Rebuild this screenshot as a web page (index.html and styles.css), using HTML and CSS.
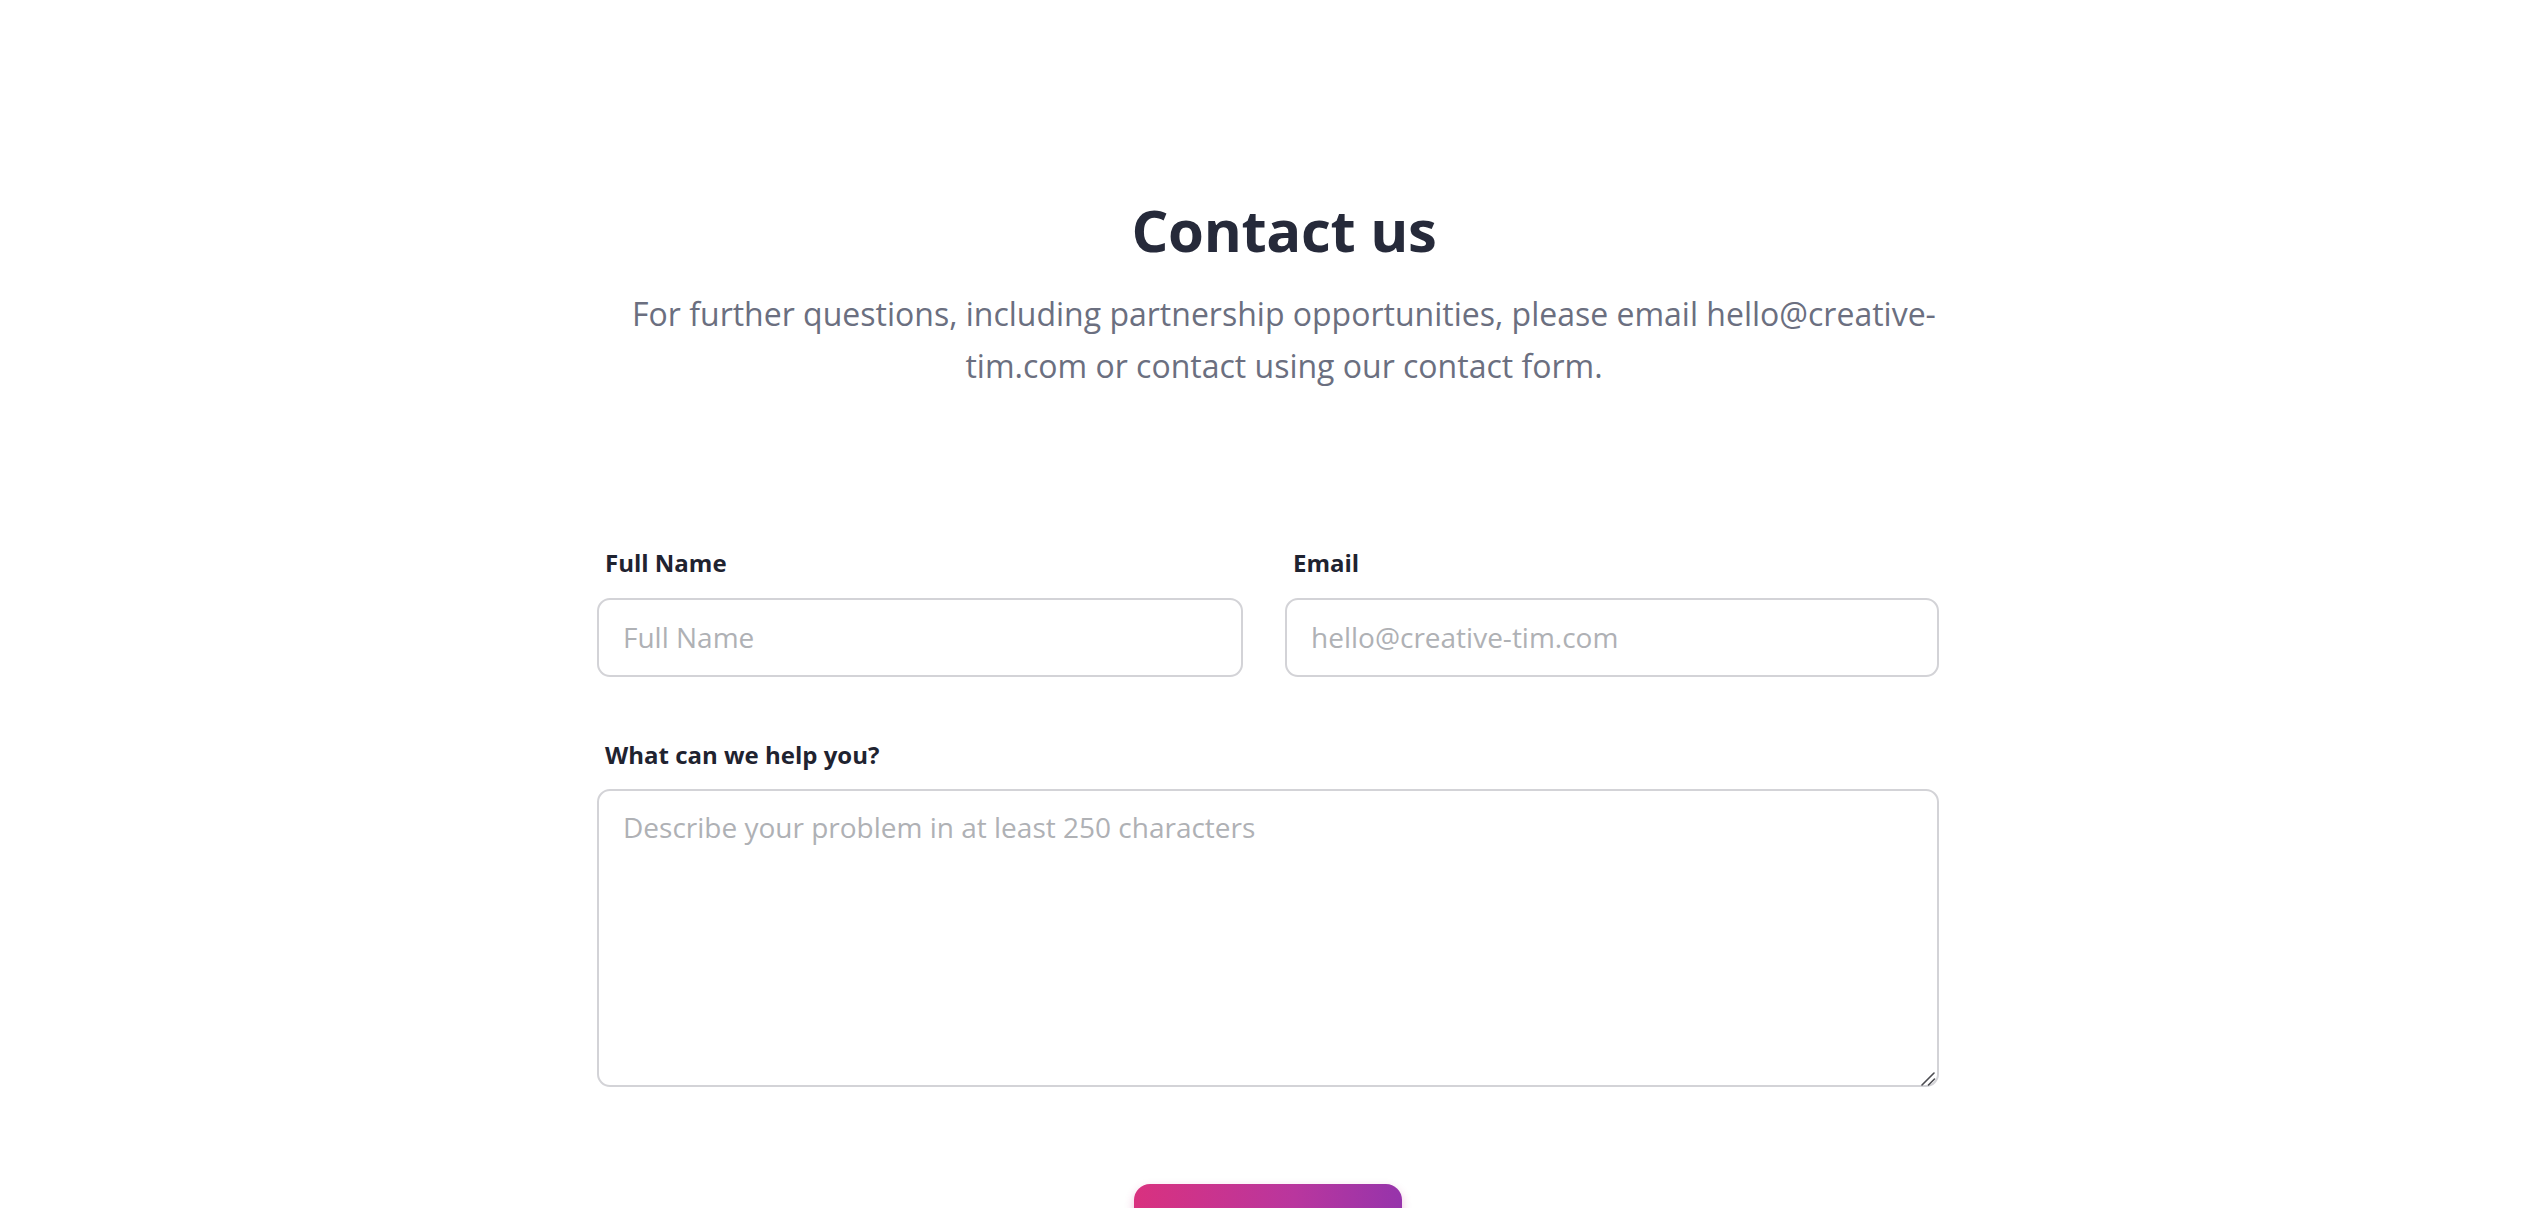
FILE: index.html
```html
<!DOCTYPE html>
<html lang="en">
<head>
<meta charset="utf-8">
<title>Contact us</title>
<link rel="stylesheet" href="styles.css">
</head>
<body>
<section class="contact">
  <div class="intro">
    <h2 class="title">Contact us</h2>
    <p class="lead">For further questions, including partnership opportunities, please email hello@creative-tim.com or contact using our contact form.</p>
  </div>
  <form class="form">
    <div class="row">
      <div class="field">
        <label class="label" for="name">Full Name</label>
        <input class="input" id="name" type="text" placeholder="Full Name">
      </div>
      <div class="field">
        <label class="label" for="email">Email</label>
        <input class="input" id="email" type="email" placeholder="hello@creative-tim.com">
      </div>
    </div>
    <div class="field field-full">
      <label class="label" for="msg">What can we help you?</label>
      <div class="textarea-wrap">
        <textarea class="textarea" id="msg" placeholder="Describe your problem in at least 250 characters"></textarea>
        <svg class="grip" width="16" height="16" viewBox="0 0 16 16" aria-hidden="true">
          <path d="M2 15 L14 3" stroke="#4d4d52" stroke-width="1.6" stroke-linecap="round"/>
          <path d="M8.5 15 L14.5 9" stroke="#4d4d52" stroke-width="1.6" stroke-linecap="round"/>
        </svg>
      </div>
    </div>
    <div class="actions">
      <button class="btn" type="button">Send Message</button>
    </div>
  </form>
</section>
</body>
</html>
```
FILE: styles.css
```css
* { box-sizing: border-box; }
html, body { margin: 0; padding: 0; background: #ffffff; }
body {
  font-family: "Open Sans", "Noto Sans", sans-serif;
  color: #262937;
  overflow: hidden;
}
.contact {
  padding-top: 194px;
}
.intro {
  width: 1372px;
  margin: 0 auto;
  padding-left: 32px;
  text-align: center;
}
.title {
  margin: 0;
  font-size: 58px;
  line-height: 72px;
  font-weight: 700;
  color: #262a3a;
  letter-spacing: -0.3px;
}
.lead {
  margin: 22px 0 0;
  font-size: 32px;
  line-height: 52px;
  font-weight: 400;
  color: #6b6f80;
}
.form {
  width: 1342px;
  margin: 154px auto 0;
}
.row {
  display: grid;
  grid-template-columns: 646px 654px;
  column-gap: 42px;
}
.field {
  display: flex;
  flex-direction: column;
}
.field-full {
  margin-top: 61px;
}
.label {
  margin: 0 0 18px 8px;
  font-size: 24px;
  line-height: 33.6px;
  font-weight: 700;
  color: #1f2330;
}
.input, .textarea {
  width: 100%;
  border: 2px solid #d3d3d7;
  border-radius: 13px;
  background: #ffffff;
  font-family: "Open Sans", "Noto Sans", sans-serif;
  font-size: 28px;
  font-weight: 400;
  color: #333;
  outline: none;
}
.input {
  height: 79px;
  padding: 0 24px;
}
.textarea-wrap {
  position: relative;
}
.textarea {
  height: 298px;
  padding: 16px 24px;
  line-height: 40px;
  resize: none;
  display: block;
}
.grip {
  position: absolute;
  right: 3px;
  bottom: 1px;
}
.input::placeholder, .textarea::placeholder {
  color: #afb1b5;
}
.actions {
  display: flex;
  justify-content: center;
  margin-top: 97px;
}
.btn {
  width: 268px;
  height: 80px;
  border: none;
  border-radius: 16px;
  background: linear-gradient(90deg, #d9317f 0%, #b9369e 60%, #9634ab 100%);
  color: #ffffff;
  font-family: "Open Sans", "Noto Sans", sans-serif;
  font-size: 22px;
  font-weight: 700;
  box-shadow: 0 4px 10px rgba(200, 50, 140, 0.3);
}
```
